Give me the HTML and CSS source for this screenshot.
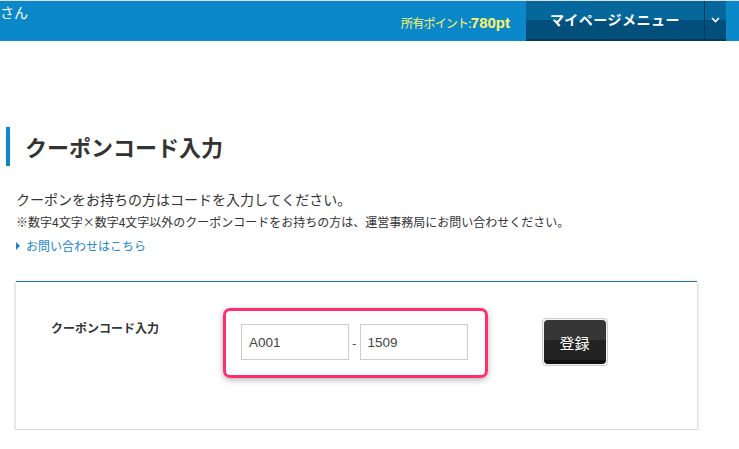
FILE: index.html
```html
<!DOCTYPE html>
<html lang="ja">
<head>
    <meta charset="UTF-8">
    <title>クーポンコード入力</title>
    <link rel="stylesheet" href="styles.css">
</head>
<body>

    <header class="header">
        <div class="user-name">さん</div>
        <div class="points">所有ポイント:<strong>780pt</strong></div>
        <div class="mypage-menu">
            <span class="menu-label">マイページメニュー</span>
            <span class="menu-toggle">
                <svg width="9" height="6" viewBox="0 0 9 6"><path d="M1 1 L4.5 4.5 L8 1" fill="none" stroke="#fff" stroke-width="1.6"/></svg>
            </span>
        </div>
    </header>

    <main class="content">
        <h1 class="page-title">クーポンコード入力</h1>

        <p class="lead">クーポンをお持ちの方はコードを入力してください。</p>
        <p class="note">※数字4文字×数字4文字以外のクーポンコードをお持ちの方は、運営事務局にお問い合わせください。</p>
        <a class="contact-link" href="#">お問い合わせはこちら</a>

        <!-- Coupon form -->
        <div class="coupon-box">
            <div class="coupon-label">クーポンコード入力</div>
            <div class="code-fields">
                <input type="text" class="code-input" value="A001">
                <span class="dash">-</span>
                <input type="text" class="code-input" value="1509">
            </div>
            <div class="btn-wrap">
                <button class="register-btn">登録</button>
            </div>
        </div>
    </main>

</body>
</html>
```

FILE: styles.css
```css
* {
    margin: 0;
    padding: 0;
    box-sizing: border-box;
}

body {
    font-family: "Noto Sans CJK JP", "Liberation Sans", sans-serif;
    color: #333;
    background: #fff;
    border-top: 1px solid #ddd;
}

/* Header */
.header {
    display: flex;
    align-items: stretch;
    height: 40px;
    background: #0b88ca;
    padding-right: 13px;
}

.user-name {
    color: #fff;
    font-size: 14px;
    line-height: 22px;
    flex: 1;
}

.points {
    color: #fff46b;
    font-size: 12px;
    align-self: center;
    margin-top: 3px;
    margin-right: 16px;
    letter-spacing: -0.8px;
}

.points strong {
    font-family: "Liberation Sans", sans-serif;
    font-size: 15px;
    letter-spacing: 0;
}

.mypage-menu {
    display: flex;
    width: 200px;
    background: linear-gradient(#05679c 0, #05679c 50%, #034f7c 50%, #034f7c 100%);
    border-bottom: 2px solid #023a5c;
    color: #fff;
}

.menu-label {
    flex: 1;
    text-align: center;
    font-size: 14px;
    font-weight: bold;
    line-height: 37px;
    letter-spacing: 0.5px;
}

.menu-toggle {
    width: 22px;
    display: flex;
    align-items: center;
    justify-content: center;
    border-left: 1px solid #023a5c;
}

/* Content */
.content {
    padding: 86px 42px 0 16px;
}

.page-title {
    font-size: 22px;
    font-weight: bold;
    color: #333;
    border-left: 4px solid #0b88ca;
    margin-left: -10px;
    padding-left: 15px;
    line-height: 39px;
    margin-bottom: 20px;
}

.lead {
    font-size: 14px;
    line-height: 26px;
}

.note {
    font-size: 12px;
    line-height: 20px;
}

.contact-link {
    display: inline-block;
    color: #1a86cc;
    font-size: 12px;
    line-height: 26px;
    text-decoration: none;
    padding-left: 10px;
    position: relative;
}

.contact-link::before {
    content: "";
    position: absolute;
    left: 0;
    top: 9px;
    border-left: 4px solid #1a86cc;
    border-top: 4px solid transparent;
    border-bottom: 4px solid transparent;
}

.coupon-box {
    display: flex;
    align-items: flex-start;
    margin-top: 22px;
    width: 681px;
    height: 149px;
    border-top: 1px solid #2a6f9c;
    border-bottom: 1px solid #d6d6d6;
    box-shadow: 0 1px 3px rgba(0, 0, 0, 0.3);
    padding: 38px 0 0 35px;
}

.coupon-label {
    font-size: 12px;
    font-weight: bold;
    width: 172px;
    line-height: 16px;
}

.code-fields {
    display: flex;
    align-items: center;
    gap: 3px;
    margin-top: -12px;
    padding: 13px 17px 15px 15px;
    border: 3px solid #ff2f6d;
    border-radius: 7px;
    box-shadow: 0 2px 6px rgba(0, 0, 0, 0.3);
}

.code-input {
    width: 108px;
    height: 36px;
    border: 1px solid #ccc;
    padding: 0 7px;
    font-family: "Liberation Sans", sans-serif;
    font-size: 13.5px;
    color: #444;
}

.dash {
    font-size: 13px;
    color: #555;
}

.btn-wrap {
    margin-left: 54px;
    margin-top: -2px;
    padding: 1px;
    border: 1px solid #ccc;
    border-radius: 4px;
    background: #f4f4f4;
}

.register-btn {
    display: block;
    width: 62px;
    height: 44px;
    border: none;
    border-radius: 4px;
    background: linear-gradient(#363636 0, #363636 45%, #222 45%, #222 90%, #111 90%);
    color: #fff;
    font-family: "Noto Sans CJK JP", sans-serif;
    font-size: 15px;
}
```
